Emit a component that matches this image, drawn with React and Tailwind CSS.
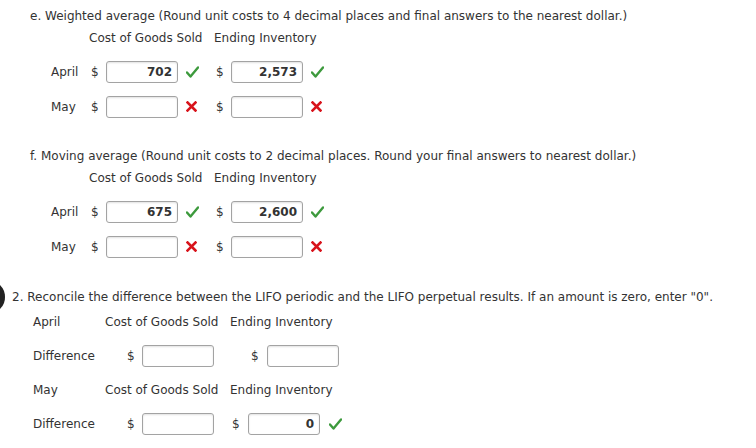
import React from 'react';

const Check = () => (
  <svg width="13" height="12" viewBox="0 0 13 12" className="shrink-0">
    <path d="M1 6.5 L4.5 10.5 L12 1.5" fill="none" stroke="#3d9a3d" strokeWidth="2.4" strokeLinecap="round" strokeLinejoin="round" />
  </svg>
);

const Cross = () => (
  <svg width="11" height="11" viewBox="0 0 11 11" className="shrink-0">
    <path d="M1.5 1.5 L9.5 9.5 M9.5 1.5 L1.5 9.5" fill="none" stroke="#d8131b" strokeWidth="2.6" strokeLinecap="square" />
  </svg>
);

const Box = ({ value }) => (
  <div className="w-[72px] h-[22px] rounded-[3px] border border-[#a3a3a3] bg-white shadow-[inset_0_1px_2px_rgba(0,0,0,0.12)] flex items-center justify-end pr-[5px] font-bold text-[#333]">
    {value}
  </div>
);

const Cell = ({ value, mark }) => (
  <div className="w-[125px] flex items-center">
    <span className="w-[18px] pl-[3px]">$</span>
    <Box value={value} />
    <span className="ml-[8px] flex items-center">
      {mark === 'ok' && <Check />}
      {mark === 'bad' && <Cross />}
    </span>
  </div>
);

const Part = ({ title, rows, top }) => (
  <div className={top}>
    <div className="h-[22px] flex items-center pl-[30px]">{title}</div>
    <div className="h-[22px] flex items-center pl-[88px]">
      <span className="w-[125px] pl-[1px]">Cost of Goods Sold</span>
      <span className="pl-[1px]">Ending Inventory</span>
    </div>
    <div className="mt-[5px]">
      {rows.map((r) => (
        <div key={r.label} className="h-[35px] flex items-center pl-[51px]">
          <span className="w-[37px]">{r.label}</span>
          <Cell value={r.a} mark={r.am} />
          <Cell value={r.b} mark={r.bm} />
        </div>
      ))}
    </div>
  </div>
);

export default function App() {
  return (
    <div className="w-[756px] h-[448px] bg-white text-[#333] text-[12px] overflow-hidden" style={{ fontFamily: '"DejaVu Sans", Verdana, sans-serif' }}>
      <Part
        top="pt-[5px]"
        title="e. Weighted average (Round unit costs to 4 decimal places and final answers to the nearest dollar.)"
        rows={[
          { label: 'April', a: '702', am: 'ok', b: '2,573', bm: 'ok' },
          { label: 'May', a: '', am: 'bad', b: '', bm: 'bad' },
        ]}
      />
      <Part
        top="mt-[21px]"
        title="f. Moving average (Round unit costs to 2 decimal places. Round your final answers to nearest dollar.)"
        rows={[
          { label: 'April', a: '675', am: 'ok', b: '2,600', bm: 'ok' },
          { label: 'May', a: '', am: 'bad', b: '', bm: 'bad' },
        ]}
      />

      <div className="mt-[22px]">
        <div className="h-[22px] flex items-center">
          <svg width="5" height="24" viewBox="0 0 5 24" className="shrink-0">
            <path d="M0 0 C4 4 5 8 5 12 C5 16 4 20 0 24 Z" fill="#222" />
          </svg>
          <span className="ml-[7px]">2. Reconcile the difference between the LIFO periodic and the LIFO perpetual results. If an amount is zero, enter "0".</span>
        </div>
        <div className="h-[22px] mt-[3px] flex items-center pl-[33px]">
          <span className="w-[72px]">April</span>
          <span className="w-[125px]">Cost of Goods Sold</span>
          <span>Ending Inventory</span>
        </div>
        <div className="h-[35px] mt-[5px] flex items-center pl-[33px]">
          <span className="w-[94px]">Difference</span>
          <span className="w-[15px]">$</span>
          <Box value="" />
          <span className="ml-[37px] w-[16px]">$</span>
          <Box value="" />
        </div>
        <div className="h-[22px] mt-[6px] flex items-center pl-[33px]">
          <span className="w-[72px]">May</span>
          <span className="w-[125px]">Cost of Goods Sold</span>
          <span>Ending Inventory</span>
        </div>
        <div className="h-[35px] mt-[5px] flex items-center pl-[33px]">
          <span className="w-[94px]">Difference</span>
          <span className="w-[15px]">$</span>
          <Box value="" />
          <span className="ml-[18px] w-[16px]">$</span>
          <Box value="0" />
          <span className="ml-[9px] flex items-center"><Check /></span>
        </div>
      </div>
    </div>
  );
}
